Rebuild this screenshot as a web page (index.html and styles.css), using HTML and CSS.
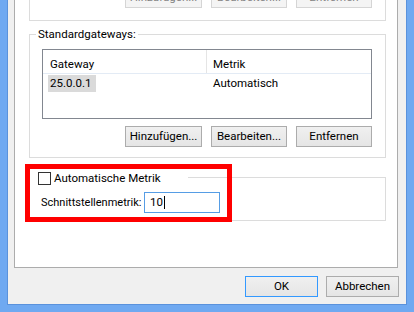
FILE: index.html
```html
<!DOCTYPE html>
<html lang="de">
<head>
  <meta charset="UTF-8" />
  <title>Erweiterte TCP/IP-Einstellungen</title>
<link rel="stylesheet" href="styles.css">
</head>
<body>
  <div class="window">
    <div class="tab-page">

      <!-- IP-Adressen (oben abgeschnitten) -->
      <div class="group group-ip">
        <div class="btn-row">
          <div class="btn disabled wide">Hinzufügen...</div>
          <div class="btn disabled">Bearbeiten...</div>
          <div class="btn disabled">Entfernen</div>
        </div>
      </div>

      <div class="group group-gw">
        <div class="group-title">Standardgateways:</div>
        <div class="list">
          <div class="list-head">
            <div class="col col-gw">Gateway</div>
            <div class="col col-metric">Metrik</div>
          </div>
          <div class="list-row">
            <div class="col col-gw"><span class="sel">25.0.0.1</span></div>
            <div class="col col-metric">Automatisch</div>
          </div>
        </div>
        <div class="btn-row">
          <div class="btn wide">Hinzufügen...</div>
          <div class="btn">Bearbeiten...</div>
          <div class="btn">Entfernen</div>
        </div>
      </div>

      <div class="group group-metric">
        <div class="group-title check-title"><span class="checkbox"></span>Automatische Metrik</div>
        <div class="metric-row">
          <span class="metric-label">Schnittstellenmetrik:</span>
          <div class="textbox">10<span class="caret"></span></div>
        </div>
      </div>

    </div>

    <div class="dialog-buttons">
      <div class="btn default">OK</div>
      <div class="btn">Abbrechen</div>
    </div>
  </div>

  <div class="marker"></div>
</body>
</html>
```

FILE: styles.css
```css
/* Fensterrahmen */
body {
  margin: 0;
  height: 312px;
  overflow: hidden;
  background-color: #6fa9f1;
  font-family: Roboto, "Liberation Sans", sans-serif;
  font-size: 11.5px;
  color: #000;
  position: relative;
}

.window {
  margin: -40px 7px 0;
  border: 1px solid #5a92dc;
  border-top: none;
  background-color: #f0f0f0;
  padding: 0 8px 7px 6px;
}

.tab-page {
  border: 1px solid #acacac;
  background-color: #fff;
  padding: 0 11px 46px 14px;
}

/* Gruppenfelder */
.group {
  border: 1px solid #dcdcdc;
  padding: 0 13px 10px 12px;
}

.group-ip {
  padding-top: 25px;
  padding-bottom: 12px;
}

.group-gw {
  margin-top: 13px;
}

.group-metric {
  margin-top: 19px;
  padding: 0 13px 7px 11px;
}

.group-title {
  width: fit-content;
  margin: -9px 0 0 -6px;
  padding: 0 2px;
  line-height: 16px;
  background-color: #fff;
}

.check-title {
  display: flex;
  align-items: center;
  width: 158px;
  box-sizing: border-box;
  margin: -8px 0 0 -11px;
  padding: 0 7px 0 8px;
}

.checkbox {
  width: 11px;
  height: 11px;
  border: 1px solid #333;
  background-color: #fff;
  margin-right: 3px;
}

/* Listenansicht */
.list {
  margin-top: 7px;
  height: 70px;
  box-sizing: border-box;
  border: 1px solid #828790;
  background-color: #fff;
}

.list-head {
  display: flex;
  height: 24px;
  box-sizing: border-box;
  border-bottom: 1px solid #e3ebf5;
  line-height: 16px;
}

.list-head .col {
  padding-top: 6px;
}

.list-row {
  display: flex;
  margin-top: 1px;
  line-height: 17px;
}

.col {
  box-sizing: border-box;
}

.col-gw {
  width: 164px;
}

.list-head .col-gw {
  border-right: 1px solid #e5e5e5;
  padding-left: 7px;
}

.list-row .col-gw {
  padding-left: 5px;
}

.col-metric {
  padding-left: 6px;
}

.sel {
  display: inline-block;
  padding: 0 5px 0 2px;
  background-color: #dadada;
}

/* Schaltflaechen */
.btn-row {
  display: flex;
  justify-content: flex-end;
  gap: 9px;
}

.group-gw .btn-row {
  margin-top: 7px;
}

.btn {
  width: 76px;
  height: 21px;
  box-sizing: border-box;
  border: 1px solid #acacac;
  background: linear-gradient(#f0f0f0, #e5e5e5);
  text-align: center;
  line-height: 19px;
}

.btn.wide {
  width: 77px;
}

.btn.disabled {
  background: #f4f4f4;
  border-color: #d5d5d5;
  color: #838383;
}

.dialog-buttons {
  display: flex;
  justify-content: flex-end;
  gap: 8px;
  margin: 8px -1px 0 0;
}

.dialog-buttons .btn {
  width: 73px;
}

.btn.default {
  border-color: #3399ff;
}

/* Metrik */
.metric-row {
  display: flex;
  align-items: center;
  margin-top: 6px;
}

.metric-label {
  width: 103px;
  flex: none;
  font-size: 11px;
  white-space: nowrap;
}

.textbox {
  width: 76px;
  height: 21px;
  box-sizing: border-box;
  border: 1px solid #569de5;
  padding-left: 5px;
  line-height: 19px;
  display: flex;
  align-items: center;
}

.caret {
  width: 1px;
  height: 13px;
  margin-left: 1px;
  background-color: #000;
}

/* rote Markierung */
.marker {
  position: absolute;
  left: 25px;
  top: 164px;
  width: 207px;
  height: 58px;
  box-sizing: border-box;
  border: 5px solid #ff0000;
}
```
